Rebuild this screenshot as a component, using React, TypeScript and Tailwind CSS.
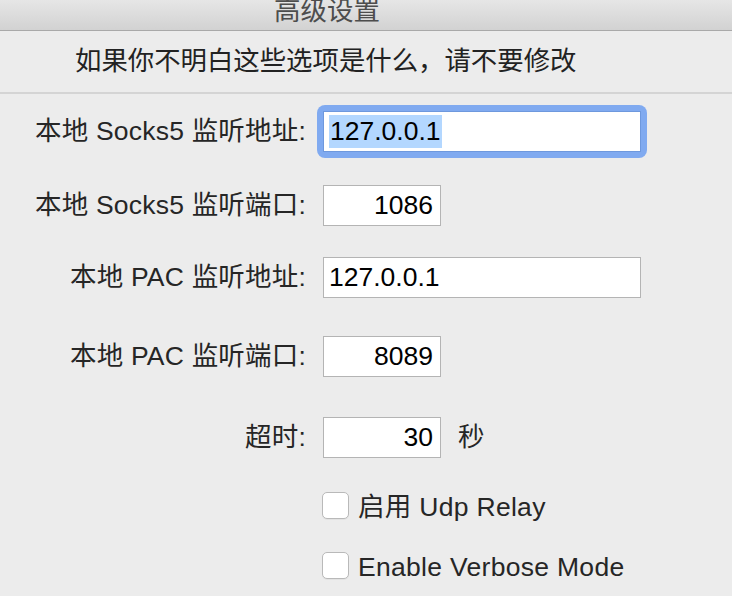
import React from 'react';

const FONT = { fontFamily: '"Liberation Sans", "Noto Sans CJK SC", sans-serif' };

const Field: React.FC<{ value: string; wide?: boolean; right?: boolean; focused?: boolean }> = ({ value, wide, right, focused }) => {
  const box = (
    <div
      className={`h-[41px] bg-white border flex items-center text-[26.5px] text-black ${
        wide ? 'w-[318px]' : 'w-[118px]'
      } ${right ? 'justify-end pr-[7px]' : 'pl-[5px]'} ${focused ? 'border-[#6e98dd]' : 'border-[#b4b4b4]'}`}
    >
      {focused ? <span className="bg-[#b3d7ff] px-[1px] leading-[33px]">{value}</span> : <span>{value}</span>}
    </div>
  );
  if (!focused) return box;
  return <div className="-m-[6px] p-[6px] rounded-[8px] bg-[#80aaf0]">{box}</div>;
};

const Row: React.FC<{ label: string; mt: string; children: React.ReactNode }> = ({ label, mt, children }) => (
  <div className={`flex items-center ${mt}`}>
    <div className="w-[306px] text-right text-[26.5px] tracking-[0.2px] text-[#262626] whitespace-nowrap">{label}</div>
    <div className="ml-[17px] flex items-center">{children}</div>
  </div>
);

const Check: React.FC<{ label: string; mt: string }> = ({ label, mt }) => (
  <div className={`flex items-start h-[27px] pl-[322px] ${mt}`}>
    <div className="w-[27px] h-[27px] shrink-0 rounded-[5px] border border-[#b9b9b9] bg-white shadow-[0_1px_0_rgba(0,0,0,0.04)]" />
    <span className="ml-[9px] text-[26.5px] tracking-[0.3px] text-[#262626] leading-[27px] pt-[2px] whitespace-nowrap">{label}</span>
  </div>
);

export default function App() {
  return (
    <div className="w-[732px] h-[596px] overflow-hidden bg-[#ececec] flex flex-col" style={FONT}>
      <div className="h-[31px] shrink-0 overflow-hidden border-b border-[#a9a9a9] bg-gradient-to-b from-[#e6e6e6] to-[#d2d2d2] pl-[274px]">
        <div className="-mt-[4px] leading-[30px] text-[26.5px] text-[#4d4d4d]">高级设置</div>
      </div>
      <div className="h-[61px] shrink-0 flex items-center pl-[75px] text-[26.4px] text-[#222]">
        如果你不明白这些选项是什么，请不要修改
      </div>
      <div className="h-[2px] shrink-0 bg-[#d4d4d4]" />
      <Row label="本地 Socks5 监听地址:" mt="mt-[17px]">
        <Field value="127.0.0.1" wide focused />
      </Row>
      <Row label="本地 Socks5 监听端口:" mt="mt-[33px]">
        <Field value="1086" right />
      </Row>
      <Row label="本地 PAC 监听地址:" mt="mt-[31px]">
        <Field value="127.0.0.1" wide />
      </Row>
      <Row label="本地 PAC 监听端口:" mt="mt-[38px]">
        <Field value="8089" right />
      </Row>
      <Row label="超时:" mt="mt-[40px]">
        <Field value="30" right />
        <span className="ml-[17px] text-[26.5px] text-[#262626]">秒</span>
      </Row>
      <Check label="启用 Udp Relay" mt="mt-[34px]" />
      <Check label="Enable Verbose Mode" mt="mt-[33px]" />
    </div>
  );
}
